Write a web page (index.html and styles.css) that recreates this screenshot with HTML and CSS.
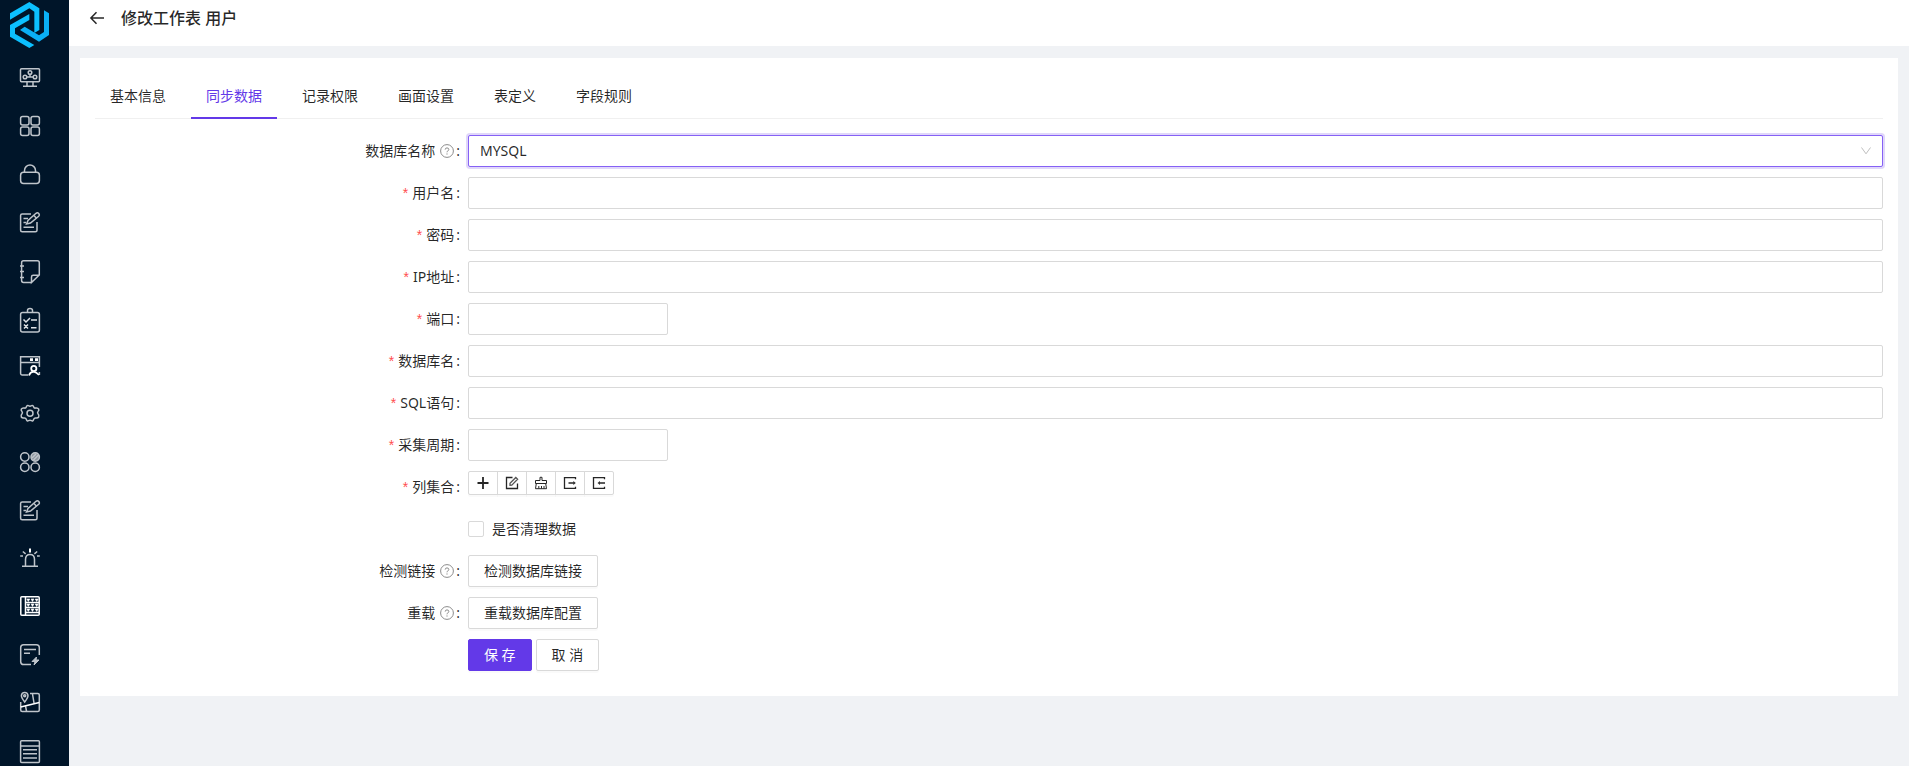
FILE: index.html
```html
<!DOCTYPE html>
<html lang="zh-CN">
<head>
<meta charset="utf-8">
<meta name="viewport" content="width=device-width, initial-scale=1">
<title>修改工作表 用户</title>
<link rel="stylesheet" href="styles.css">
</head>
<body>
<div class="app">
  <aside class="sidebar">
    <a class="logo" href="#" aria-label="首页">
      <svg width="39" height="46" viewBox="30 8 117 138" fill="#0cc0ff">
        <path d="M30 42L88 8L118 27V92L103 101V37L88 27L30 61Z"/>
        <path d="M132 33L147 42V107L117 127L60 92L74 82L117 108L132 98Z" fill="#0ab0f6"/>
        <path d="M88 44V62L45 87V103L103 137L88 146L30 112V77Z"/>
      </svg>
    </a>
    <nav class="menu" aria-label="主菜单">
      <a href="#" aria-label="监控"><svg viewBox="0 0 24 24"><rect x="2.5" y="2.7" width="19" height="13" rx="1"/><path d="M9 16v4M15 16v4M5 20.3h14M12 8v3M12 11H8M12 11h4"/><circle cx="12" cy="6.5" r="1.8"/><circle cx="7" cy="11" r="1.8"/><circle cx="17" cy="11" r="1.8"/></svg></a>
      <a href="#" aria-label="应用"><svg viewBox="0 0 24 24"><rect x="2.6" y="2.6" width="8.4" height="8.4" rx="2"/><rect x="13" y="2.6" width="8.4" height="8.4" rx="2"/><rect x="2.6" y="13" width="8.4" height="8.4" rx="2"/><rect x="13" y="13" width="8.4" height="8.4" rx="2"/></svg></a>
      <a href="#" aria-label="权限"><svg viewBox="0 0 24 24"><rect x="2.6" y="10.2" width="18.8" height="11.2" rx="3"/><path d="M6.5 10V8.5a5.5 5.5 0 0 1 11 0V10"/></svg></a>
      <a href="#" aria-label="表单"><svg viewBox="0 0 24 24"><path d="M13 4H4.2Q2.6 4 2.6 5.5V20.3Q2.6 21.8 4.2 21.8H17.4Q19 21.8 19 20.3V12M5.5 8.5H10M5.5 12.5H8M5.5 17.3H16"/><path d="M8.5 14L10 10.5L18 3.3Q19.5 2.3 20.8 3.5Q22 5 20.7 6.3L12.5 13Z"/><path d="M16 5.5l2.5 2.8"/></svg></a>
      <a href="#" aria-label="笔记"><svg viewBox="0 0 24 24"><path d="M13.5 24.5H5.5Q3.6 24.5 3.6 22.6V4.7Q3.6 2.8 5.5 2.8H19.4Q21.3 2.8 21.3 4.7V17L13.5 24.5V18.9Q13.5 17.3 15.2 17.3H21M2 8h4M2 13.5h4M2 19.5h4"/></svg></a>
      <a href="#" aria-label="任务"><svg viewBox="0 0 24 24"><rect x="2.6" y="6.6" width="18.8" height="19.4" rx="2"/><path d="M9.5 6V4.5Q9.5 2.6 12 2.6T14.5 4.5V6"/><path d="M5.5 13.5l2.5 2.5 4-4M13 14h6M6 18.5l4 4M10 18.5l-4 4M13 21.8h5.5" stroke="#dfe3e6"/></svg></a>
      <a href="#" aria-label="门户"><svg viewBox="0 0 24 24"><path d="M10 21H4Q2.6 21 2.6 19.6V2.8H21.4V13M2.6 8.5H21.4M21.4 18V21"/><path d="M12 5.6h3M17 5.6h3" stroke="#fff" stroke-width="2.6"/><circle cx="15.8" cy="14.5" r="2.6" stroke="#fff" stroke-width="1.8"/><path d="M11 21.5Q12 18 15.5 17.6Q18.5 18 21 21" stroke="#fff" stroke-width="1.8"/></svg></a>
      <a href="#" aria-label="设置"><svg viewBox="0 0 24 24"><path d="M8.3 5Q9 2.7 10.5 3.7Q12 4.6 13.5 3.7Q15 2.7 15.7 5Q16.1 6.3 17.5 6.1Q19.8 5.6 20.7 7.2Q21.200 8.3 20 9.6Q19.1 10.700 20 11.8Q21.500 13.5 20.700 15Q19.8 16.4 17.6 16Q16.2 15.9 15.700 17.3Q15 19.6 13.5 18.7Q12 17.8 10.5 18.700Q9 19.6 8.3 17.3Q7.8 15.9 6.4 16Q4.200 16.4 3.300 15Q2.500 13.5 4 11.8Q4.900 10.7 4 9.6Q2.800 8.3 3.300 7.2Q4.200 5.6 6.5 6.1Q7.9 6.3 8.3 5Z"/><circle cx="12" cy="11.2" r="3"/></svg></a>
      <a href="#" aria-label="组件"><svg viewBox="0 0 24 24"><circle cx="6.8" cy="7" r="4.2"/><circle cx="17.2" cy="7" r="4.2" fill="#8d969f"/><circle cx="6.8" cy="17.2" r="4.2"/><circle cx="17.2" cy="17.2" r="4.2"/><path d="M14 8l4-4M15.5 10l5-5"/></svg></a>
      <a href="#" aria-label="填报"><svg viewBox="0 0 24 24"><path d="M13 4H4.2Q2.6 4 2.6 5.5V20.3Q2.6 21.8 4.2 21.8H17.4Q19 21.8 19 20.3V12M5.5 8.5H10M5.5 12.5H8M5.5 17.3H16"/><path d="M8.5 14L10 10.5L18 3.3Q19.5 2.3 20.8 3.5Q22 5 20.7 6.3L12.5 13Z"/><path d="M16 5.5l2.5 2.8"/></svg></a>
      <a href="#" aria-label="报警"><svg viewBox="0 0 24 24"><path d="M7.500 19.500V13.500Q7.500 8.500 12 8.500T16.500 13.500V19.500M4 20.300H20M2.200 10H5M19 10h2.800M4.800 5.500l2.800 2.300M19.200 5.500l-2.800 2.300"/><path d="M12 2.5v4" stroke="#fff" stroke-width="2"/></svg></a>
      <a href="#" aria-label="工作表" class="current"><svg viewBox="0 0 24 24"><rect x="2.8" y="2.8" width="18.4" height="18.4" rx="1"/><path d="M7.5 3v18M8 8.5h13M8 13.5h13M8 18.500h13"/><path d="M8.8 5h3l-1.5 2.5ZM13 5h3l-1.5 2.5ZM17.2 5h3l-1.5 2.5ZM8.8 10h3l-1.5 2.5ZM13 10h3l-1.5 2.5ZM17.2 10h3l-1.5 2.5ZM8.8 15h3l-1.5 2.5ZM13 15h3l-1.5 2.5ZM17.2 15h3l-1.5 2.5Z" stroke-width="0.6"/></svg></a>
      <a href="#" aria-label="流程"><svg viewBox="0 0 24 24"><path d="M13 22.6H5.6Q2.7 22.6 2.7 19.8V5.5Q2.7 2.7 5.6 2.7H18.4Q21.3 2.7 21.3 5.5V13M6 7.5H18M6 11.3H12"/><path d="M18.5 15l-4.500 4.500h3l-1 3.500 5-5h-3Z" fill="#bfc5cb" stroke-width="1"/></svg></a>
      <a href="#" aria-label="地图"><svg viewBox="0 0 24 24"><path d="M2.7 12V20Q2.7 21.5 4.2 21.5H19.8Q21.3 21.5 21.3 20V5Q21.3 3.5 19.8 3.5H12M14.5 4L16 13M7.5 16L8.5 21"/><path d="M2.7 17L21.3 12.5" stroke="#fff"/><path d="M6.7 12Q3.4 8 3.4 5.6Q3.6 2.4 6.7 2.4T10 5.6Q10 8 6.7 12Z"/><circle cx="6.7" cy="5.7" r="1"/></svg></a>
      <a href="#" aria-label="列表"><svg viewBox="0 0 24 24"><rect x="2.6" y="2.8" width="18.8" height="21.6" rx="1"/><path d="M3 8H21M5 11.8H19M5 15.8H19M5 20H19"/></svg></a>
    </nav>
  </aside>

  <main class="main">
    <header class="page-header">
      <button class="back" type="button" aria-label="返回"><svg width="16" height="16" viewBox="0 0 16 16" fill="none" stroke="currentColor" stroke-width="1.5"><path d="M15 8H2M7.5 2.2L1.9 8L7.5 13.8"/></svg></button>
      <h1>修改工作表 用户</h1>
    </header>

    <section class="panel">
      <div class="tabs" role="tablist">
        <button type="button" role="tab">基本信息</button>
        <button type="button" role="tab" class="active" aria-selected="true">同步数据</button>
        <button type="button" role="tab">记录权限</button>
        <button type="button" role="tab">画面设置</button>
        <button type="button" role="tab">表定义</button>
        <button type="button" role="tab">字段规则</button>
      </div>

      <form class="form">
        <div class="row">
          <label class="label" for="db-type">数据库名称<svg class="help" viewBox="0 0 14 14"><circle cx="7" cy="7" r="6.4"/><path d="M5.2 5.6Q5.2 3.9 7 3.9T8.8 5.5Q8.8 6.5 7.8 6.9Q7 7.2 7 8.3M7 9.4v1.2"/></svg></label>
          <div class="control select">
            <select id="db-type"><option>MYSQL</option></select>
            <svg class="arrow" viewBox="0 0 12 12"><path d="M1.5 2.5L6 8.8L10.5 2.5"/></svg>
          </div>
        </div>
        <div class="row"><label class="label required" for="user">用户名</label><div class="control"><input class="text" id="user" type="text"></div></div>
        <div class="row"><label class="label required" for="password">密码</label><div class="control"><input class="text" id="password" type="password"></div></div>
        <div class="row"><label class="label required" for="ip">IP地址</label><div class="control"><input class="text" id="ip" type="text"></div></div>
        <div class="row"><label class="label required" for="port">端口</label><div class="control"><input class="text short" id="port" type="text"></div></div>
        <div class="row"><label class="label required" for="db-name">数据库名</label><div class="control"><input class="text" id="db-name" type="text"></div></div>
        <div class="row"><label class="label required" for="sql">SQL语句</label><div class="control"><input class="text" id="sql" type="text"></div></div>
        <div class="row"><label class="label required" for="period">采集周期</label><div class="control"><input class="text short" id="period" type="text"></div></div>
        <div class="row">
          <span class="label required" id="columns">列集合</span>
          <div class="control">
            <div class="tools" role="group" aria-labelledby="columns">
              <button type="button" aria-label="新增"><svg viewBox="0 0 14 14"><path d="M7 1v12M1.5 7h11" stroke-width="1.8"/></svg></button>
              <button type="button" aria-label="编辑"><svg viewBox="0 0 14 14"><path d="M7.5 1.5H1.5V12.5H12.5V7.5"/><path d="M5 9.2V7.3L10.8 1.5L12.6 3.3L6.8 9.1Z" stroke="#555"/></svg></button>
              <button type="button" aria-label="清空"><svg viewBox="0 0 14 14"><path d="M6 4.5V1.3H8V4.5H12.5V7.5H1.5V4.5ZM2.3 7.5L1.5 12.7H12.5L11.7 7.5M4.8 12.5V10M7.5 12.5V10M10 12.5V10" stroke-width="1"/></svg></button>
              <button type="button" aria-label="导出"><svg viewBox="0 0 14 14"><path d="M12.5 3.3V1.6H1.5V12.4H12.5V10.7M5.5 7H11.5"/><path d="M10.3 5L12.8 7L10.3 9Z" fill="#333" stroke="none"/></svg></button>
              <button type="button" aria-label="导入"><svg viewBox="0 0 14 14"><path d="M12.5 3.3V1.6H1.5V12.4H12.5V10.7M7 7H13"/><path d="M8 5L5.5 7L8 9Z" fill="#333" stroke="none"/></svg></button>
            </div>
          </div>
        </div>
        <div class="row"><span class="label blank"></span><div class="control"><label class="check"><input type="checkbox">是否清理数据</label></div></div>
        <div class="row">
          <label class="label" for="test">检测链接<svg class="help" viewBox="0 0 14 14"><circle cx="7" cy="7" r="6.4"/><path d="M5.2 5.6Q5.2 3.9 7 3.9T8.8 5.5Q8.8 6.5 7.8 6.9Q7 7.2 7 8.3M7 9.4v1.2"/></svg></label>
          <div class="control"><button class="btn" id="test" type="button">检测数据库链接</button></div>
        </div>
        <div class="row">
          <label class="label" for="reload">重载<svg class="help" viewBox="0 0 14 14"><circle cx="7" cy="7" r="6.4"/><path d="M5.2 5.6Q5.2 3.9 7 3.9T8.8 5.5Q8.8 6.5 7.8 6.9Q7 7.2 7 8.3M7 9.4v1.2"/></svg></label>
          <div class="control"><button class="btn" id="reload" type="button">重载数据库配置</button></div>
        </div>
        <div class="row"><span class="label blank"></span><div class="control actions"><button class="btn primary" type="button">保 存</button><button class="btn" type="button">取 消</button></div></div>
      </form>
    </section>
  </main>
</div>
</body>
</html>
```
FILE: styles.css
```css
*, *::before, *::after { box-sizing: border-box; }

body {
  margin: 0;
  background: #f0f2f5;
  color: rgba(0, 0, 0, 0.85);
  font: 14px/22px "Noto Sans", "Noto Sans CJK SC", sans-serif;
}

button, input, select { font: inherit; color: inherit; }
button { cursor: pointer; }

.app { display: flex; min-height: 100vh; }

.sidebar {
  position: sticky;
  top: 0;
  flex: none;
  width: 69px;
  height: 100vh;
  overflow: hidden;
  background: #001529;
}
.logo { display: block; height: 54px; padding: 2px 0 0 10px; }
.logo svg { display: block; }
.menu { display: flex; flex-direction: column; }
.menu a {
  display: flex;
  flex: none;
  align-items: center;
  height: 48px;
  padding-left: 18px;
}
.menu svg {
  width: 24px;
  height: 24px;
  overflow: visible;
  fill: none;
  stroke: #bfc5cb;
  stroke-width: 1.5;
}
.menu .current svg { stroke: #fff; stroke-width: 1.5; }
.menu .current path:last-child { fill: #fff; }

.main { flex: 1; min-width: 0; }

.page-header {
  display: flex;
  align-items: center;
  gap: 16px;
  height: 46px;
  padding: 0 20px 10px;
  background: #fff;
}
.page-header h1 { margin: 0; font-size: 16px; font-weight: 500; line-height: 24px; }
.back { display: flex; padding: 0; border: 0; background: none; }

.panel {
  margin: 12px 11px;
  padding: 15px 15px 25px;
  background: #fff;
}

.tabs {
  display: flex;
  gap: 10px;
  margin-bottom: 16px;
  border-bottom: 1px solid #f0f0f0;
}
.tabs button {
  margin-bottom: -1px;
  padding: 12px 15px 10px;
  border: 0;
  border-bottom: 2px solid transparent;
  background: none;
}
.tabs .active { border-color: #6339e8; color: #6339e8; }

.form { display: flex; flex-direction: column; gap: 10px; }
.row { display: flex; min-height: 32px; }

.label {
  display: flex;
  flex: 0 0 20.86%;
  align-items: center;
  justify-content: flex-end;
  height: 32px;
}
.label::after { content: ":"; margin: 0 8px 0 2px; }
.label.blank::after { content: none; }
.required::before {
  content: "*";
  margin-right: 4px;
  color: #ff4d4f;
  font-family: "Liberation Sans", sans-serif;
}
.help {
  width: 14px;
  height: 14px;
  margin-left: 5px;
  fill: none;
  stroke: #8c8c8c;
}

.control { flex: 1; min-width: 0; }

.text, .select select {
  display: block;
  width: 100%;
  height: 32px;
  padding: 4px 11px;
  border: 1px solid #d9d9d9;
  border-radius: 2px;
  background: #fff;
  outline: 0;
}
.text.short { width: 200px; }

.select { position: relative; }
.select select {
  appearance: none;
  border-color: #8661f5;
  box-shadow: 0 0 0 2px rgba(99, 57, 232, 0.2);
}
.arrow {
  position: absolute;
  top: 10px;
  right: 11px;
  width: 12px;
  height: 12px;
  fill: none;
  stroke: #bfbfbf;
  pointer-events: none;
}

.tools { display: flex; }
.tools button {
  display: flex;
  align-items: center;
  justify-content: center;
  width: 30px;
  height: 24px;
  padding: 0;
  border: 1px solid #d9d9d9;
  background: #fff;
  box-shadow: 0 2px 0 rgba(0, 0, 0, 0.02);
}
.tools button + button { margin-left: -1px; }
.tools button:first-child { border-radius: 2px 0 0 2px; }
.tools button:last-child { border-radius: 0 2px 2px 0; }
.tools svg {
  width: 14px;
  height: 14px;
  fill: none;
  stroke: #262626;
  stroke-width: 1.3;
}

.check { display: inline-flex; align-items: center; gap: 8px; height: 32px; }
.check input {
  appearance: none;
  width: 16px;
  height: 16px;
  margin: 0;
  border: 1px solid #d9d9d9;
  border-radius: 2px;
  background: #fff;
}
.check input:checked { border-color: #6339e8; background: #6339e8; }

.btn {
  height: 32px;
  padding: 4px 15px;
  border: 1px solid #d9d9d9;
  border-radius: 2px;
  background: #fff;
  box-shadow: 0 2px 0 rgba(0, 0, 0, 0.02);
}
.primary { border-color: #6339e8; background: #6339e8; color: #fff; }
.actions { display: flex; gap: 4px; }
```
